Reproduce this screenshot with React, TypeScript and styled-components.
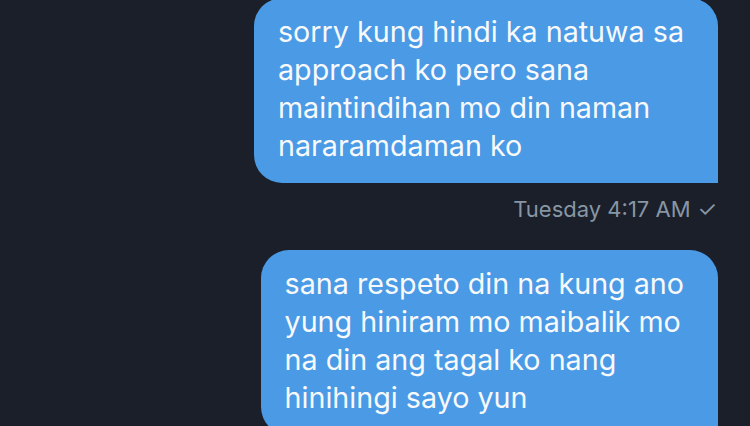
import styled, { createGlobalStyle } from 'styled-components'

const GlobalStyle = createGlobalStyle`
  html, body {
    margin: 0;
    padding: 0;
    background: #1a1f29;
    overflow: hidden;
  }
`

const Thread = styled.div`
  width: 750px;
  height: 426px;
  background: #1a1f29;
  display: flex;
  flex-direction: column;
  align-items: flex-end;
  padding-right: 32px;
  box-sizing: border-box;
  font-family: Inter, 'Noto Sans', sans-serif;
  overflow: hidden;
`

const Bubble = styled.div<{ $top: number }>`
  margin-top: ${p => p.$top}px;
  background: #4a9ae6;
  color: #f7f9fb;
  font-size: 28.7px;
  line-height: 38px;
  padding: 15px 34px 18px 24px;
  border-radius: 28px 28px 0 28px;
  white-space: pre-line;
  flex-shrink: 0;
`

const Meta = styled.div`
  margin-top: 14px;
  margin-right: 1px;
  color: #8796a5;
  font-size: 22px;
  line-height: 24px;
  display: flex;
  align-items: center;
  gap: 7px;
`

const messages = [
  'sorry kung hindi ka natuwa sa\napproach ko pero sana\nmaintindihan mo din naman\nnararamdaman ko',
  'sana respeto din na kung ano\nyung hiniram mo maibalik mo\nna din ang tagal ko nang\nhinihingi sayo yun',
]

export default function App() {
  return (
    <Thread>
      <GlobalStyle />
      <Bubble $top={-2}>{messages[0]}</Bubble>
      <Meta>
        <span>Tuesday 4:17 AM</span>
        <span>✓</span>
      </Meta>
      <Bubble $top={29}>{messages[1]}</Bubble>
    </Thread>
  )
}
